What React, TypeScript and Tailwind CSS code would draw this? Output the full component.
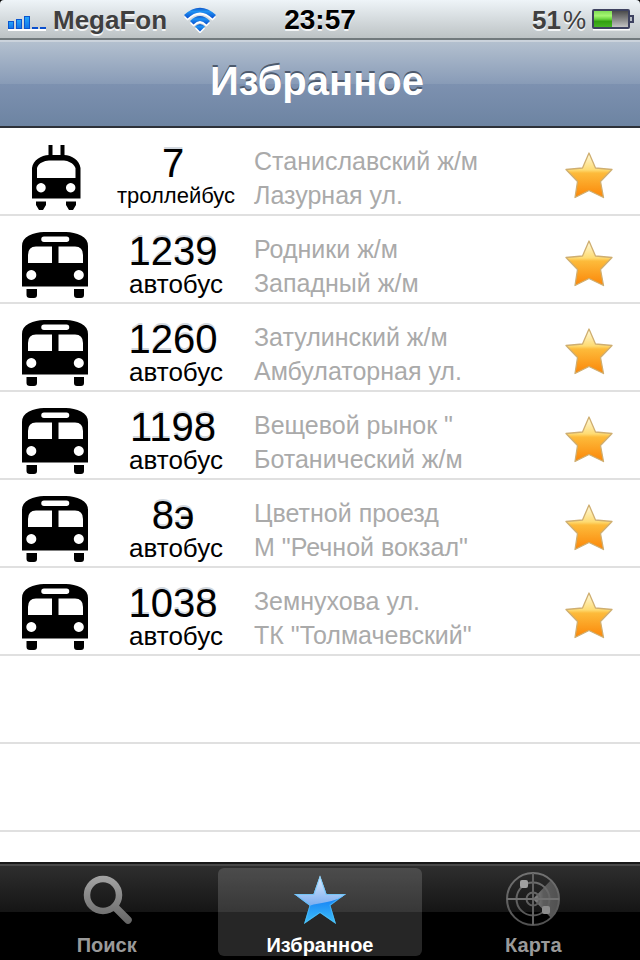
import type { ReactNode } from "react";

type Route = {
  number: string;
  kind: "троллейбус" | "автобус";
  from: string;
  to: string;
};

const routes: Route[] = [
  { number: "7", kind: "троллейбус", from: "Станиславский ж/м", to: "Лазурная ул." },
  { number: "1239", kind: "автобус", from: "Родники ж/м", to: "Западный ж/м" },
  { number: "1260", kind: "автобус", from: "Затулинский ж/м", to: "Амбулаторная ул." },
  { number: "1198", kind: "автобус", from: "Вещевой рынок \"", to: "Ботанический ж/м" },
  { number: "8э", kind: "автобус", from: "Цветной проезд", to: "М \"Речной вокзал\"" },
  { number: "1038", kind: "автобус", from: "Земнухова ул.", to: "ТК \"Толмачевский\"" },
];

function SignalIcon() {
  return (
    <svg width="38" height="16" viewBox="0 0 38 16" aria-hidden="true">
      <defs>
        <linearGradient id="signal" x1="0" y1="0" x2="0" y2="1">
          <stop offset="0" stopColor="#27a8fb" />
          <stop offset="1" stopColor="#1173e6" />
        </linearGradient>
      </defs>
      <path d="M0 14h38" stroke="#fff" strokeWidth="2" />
      <g fill="url(#signal)" stroke="#0b55cf">
        <rect x=".5" y="5.500" width="5" height="7" />
        <rect x="8.500" y="3.500" width="5" height="9" />
        <rect x="16.500" y=".5" width="5" height="12" />
      </g>
      <path d="M24 12h6M32 12h6" stroke="#0b50cd" strokeWidth="2" />
    </svg>
  );
}

function WifiIcon() {
  return (
    <svg width="32" height="26" viewBox="0 0 32 26" aria-hidden="true">
      <defs>
        <linearGradient id="wifi" x1="0" y1="0" x2="0" y2="1">
          <stop offset="0" stopColor="#0f55c8" />
          <stop offset=".35" stopColor="#1f92f2" />
          <stop offset="1" stopColor="#0a4fd0" />
        </linearGradient>
      </defs>
      <g fill="#fff" transform="translate(0 2)">
        <path d="M0 8Q16-6.500 32 8L28.500 11.500Q16-.5 3.500 11.500Z" />
        <path d="M6 14Q16 4 26 14L22.500 17.500Q16 10.500 9.500 17.500Z" />
        <path d="M11 19.500Q16 14.500 21 19.500L16 24.500Z" />
      </g>
      <path fill="url(#wifi)" d="M0 8Q16-6.500 32 8L28.500 11.500Q16-.5 3.500 11.500Z" />
      <path fill="url(#wifi)" d="M6 14Q16 4 26 14L22.500 17.500Q16 10.500 9.500 17.500Z" />
      <path fill="url(#wifi)" d="M11 19.500Q16 14.500 21 19.500L16 24.500Z" />
    </svg>
  );
}

function BatteryIcon() {
  return (
    <svg width="42" height="22" viewBox="0 0 42 22" aria-hidden="true">
      <defs>
        <linearGradient id="charge" x1="0" y1="0" x2="0" y2="1">
          <stop offset="0" stopColor="#7fdd55" />
          <stop offset=".3" stopColor="#a5f572" />
          <stop offset=".5" stopColor="#6bd540" />
          <stop offset=".65" stopColor="#32a010" />
          <stop offset="1" stopColor="#45b324" />
        </linearGradient>
        <linearGradient id="empty" x1="0" y1="0" x2="0" y2="1">
          <stop offset="0" stopColor="#444" />
          <stop offset=".5" stopColor="#858585" />
          <stop offset="1" stopColor="#cbcbcb" />
        </linearGradient>
      </defs>
      <path d="M1 20.500h37" stroke="#fff" strokeWidth="2" />
      <rect x="1" y="1" width="36" height="18" rx="1" fill="url(#empty)" stroke="#3e4260" strokeWidth="2" />
      <rect x="2" y="2" width="18" height="16" fill="url(#charge)" />
      <path d="M38 7h3v6h-3" fill="#b9bec6" stroke="#3e4260" strokeWidth="2" />
    </svg>
  );
}

function BusIcon() {
  return (
    <svg width="66" height="66" viewBox="0 0 66 66" role="img" aria-label="Автобус">
      <path
        fillRule="evenodd"
        d="M0 54.500V14Q0 7 7 3.500Q14 0 22 0H44Q52 0 59 3.500Q66 7 66 14V54.500ZM22 4.500a2.700 2.700 0 0 0 0 5.500H44.500a2.700 2.700 0 0 0 0-5.500ZM6 31V23Q6 14.500 14 14.500H30V31ZM36.500 31V14.500H53Q61 14.500 61 23V31ZM9.300 38a5 5 0 1 0 .01 0ZM56.800 38a5 5 0 1 0 .01 0Z"
      />
      <path d="M4.500 57H15V63Q15 66 12 66H8Q4.500 66 4.500 63ZM52 57H62V63Q62 66 59 66H55Q52 66 52 63Z" />
    </svg>
  );
}

function TrolleybusIcon() {
  return (
    <svg width="66" height="66" viewBox="0 0 66 66" role="img" aria-label="Троллейбус">
      <path d="M26.500 1H30.500V12H26.500ZM38.500 1H42.500V12H38.500Z" />
      <path
        fillRule="evenodd"
        d="M10 54.500V24C11 16 19 11.500 27 11H42C50 11.500 57.500 16 58.500 24V54.500ZM15 34H53.500V24C51 18.500 46 17 42 16.500H27C22 17 17 18.500 15 24ZM19 39a4.700 4.700 0 1 0 .01 0ZM48.700 39a4.700 4.700 0 1 0 .01 0Z"
      />
      <path d="M14 57.500H24V61L21 66H17L14 61ZM44 57.500H54V61L51 66H47L44 61Z" />
    </svg>
  );
}

function GoldStar() {
  return (
    <svg width="50" height="50" viewBox="0 0 50 50" aria-hidden="true">
      <defs>
        <linearGradient id="gold" x1="0" y1="0" x2="0" y2="1">
          <stop offset="0" stopColor="#fffbe0" />
          <stop offset=".38" stopColor="#fedb72" />
          <stop offset=".45" stopColor="#fdbb3b" />
          <stop offset="1" stopColor="#fb8608" />
        </linearGradient>
      </defs>
      <path
        d="M25 2L31.500 17L48 18.500L36.500 30.500L39.500 46.500L25 39.500L11 46.500L13.500 30.500L2 18.500L18.500 17Z"
        fill="url(#gold)"
        stroke="#cfae70"
        strokeWidth="1.300"
        strokeLinejoin="round"
      />
    </svg>
  );
}

function SearchIcon() {
  return (
    <svg width="56" height="56" viewBox="0 0 56 56" fill="none" aria-hidden="true">
      <defs>
        <linearGradient id="lens" gradientUnits="userSpaceOnUse" x1="0" y1="4" x2="0" y2="52">
          <stop offset="0" stopColor="#a5a5a5" />
          <stop offset="1" stopColor="#666" />
        </linearGradient>
      </defs>
      <g stroke="url(#lens)">
        <circle cx="24" cy="24" r="16" strokeWidth="6.500" />
        <path d="M36 36L49 49" strokeWidth="7.500" strokeLinecap="round" />
      </g>
    </svg>
  );
}

function BlueStar() {
  return (
    <svg width="56" height="56" viewBox="0 0 56 56" aria-hidden="true">
      <defs>
        <linearGradient id="blue" x1="0" y1="0" x2="0" y2="1">
          <stop offset="0" stopColor="#86bdf5" />
          <stop offset=".5" stopColor="#1683f5" />
          <stop offset="1" stopColor="#45c8fa" />
        </linearGradient>
        <linearGradient id="gloss" x1="0" y1="0" x2="0" y2="1">
          <stop offset="0" stopColor="#f1f7ff" />
          <stop offset="1" stopColor="#75aaf0" />
        </linearGradient>
        <clipPath id="star">
          <path d="M28 4.500L34.500 23H54L38.500 34.500L44 53L28 42L12 53L17.500 34.500L2 23H21.500Z" />
        </clipPath>
      </defs>
      <g clipPath="url(#star)">
        <path d="M0 0H56V56H0Z" fill="url(#blue)" />
        <path d="M0 0H56V24Q40 31 30 32Q21 33 14 36L0 24Z" fill="url(#gloss)" />
        <path
          d="M28 4.500L34.500 23H54L38.500 34.500L44 53L28 42L12 53L17.500 34.500L2 23H21.500Z"
          fill="none"
          stroke="#56c5f7"
          strokeOpacity=".6"
          strokeWidth="2"
        />
      </g>
    </svg>
  );
}

function RadarIcon() {
  return (
    <svg width="56" height="56" viewBox="0 0 56 56" fill="none" aria-hidden="true">
      <defs>
        <linearGradient id="sweep">
          <stop offset="0" stopColor="#8a8a8a" />
          <stop offset=".4" stopColor="#5c5c5c" />
          <stop offset="1" stopColor="#505050" />
        </linearGradient>
        <linearGradient id="rings" gradientUnits="userSpaceOnUse" x1="0" y1="0" x2="0" y2="56">
          <stop offset="0" stopColor="#747474" />
          <stop offset="1" stopColor="#505050" />
        </linearGradient>
      </defs>
      <path d="M28 28L46 9A26 26 0 0 1 46 47Z" fill="url(#sweep)" />
      <g stroke="url(#rings)" strokeWidth="2">
        <circle cx="28" cy="28" r="26" />
        <circle cx="28" cy="28" r="16.500" />
        <circle cx="28" cy="28" r="6.500" />
        <path d="M28 2V54" stroke="#626262" />
        <path d="M2 28H54" stroke="#707070" />
      </g>
      <rect x="15" y="9" width="8" height="8" rx="2" fill="#a0a0a0" />
      <rect x="37" y="35" width="8" height="8" rx="2" fill="#8c8c8c" />
    </svg>
  );
}

function RouteRow({ route }: { route: Route }) {
  const trolley = route.kind === "троллейбус";
  return (
    <li className="flex h-[88px] border-b-2 border-[#e0e0e0] px-[22px]">
      <div className="w-[66px] shrink-0 pt-4">{trolley ? <TrolleybusIcon /> : <BusIcon />}</div>
      <div className="ml-6 w-32 shrink-0 pt-[15px] text-center text-black">
        <div className="pr-1.5 text-[40px] leading-10 [text-shadow:0_-2px_0_#d3d9e0]">{route.number}</div>
        <div className={trolley ? "text-[22px] leading-[26px]" : "text-[26px] leading-[26px]"}>{route.kind}</div>
      </div>
      <div className="ml-3.5 min-w-0 flex-1 pt-4 text-[25px] leading-[34px] whitespace-nowrap text-[#aaa]">
        <div>{route.from}</div>
        <div>{route.to}</div>
      </div>
      <button type="button" aria-label="Убрать из избранного" className="mt-[23px] h-[50px] w-[54px] shrink-0">
        <GoldStar />
      </button>
    </li>
  );
}

function Tab({ label, icon, active = false }: { label: string; icon: ReactNode; active?: boolean }) {
  return (
    <button
      type="button"
      aria-current={active ? "page" : undefined}
      className={`mx-[5px] flex h-[88px] flex-1 flex-col items-center rounded-md text-[20px] leading-6 font-bold ${
        active ? "bg-white/15 text-white" : "text-[#9a9a9a]"
      }`}
    >
      <span className="mt-[3px] mb-1.5">{icon}</span>
      {label}
    </button>
  );
}

export default function App() {
  return (
    <div className="flex min-h-screen flex-col bg-white font-['Liberation_Sans',Arial,sans-serif]">
      <div className="bg-black">
        <header className="grid h-10 grid-cols-[1fr_auto_1fr] items-center rounded-t-[4px] border-b-2 border-[#727a7d] bg-linear-to-b from-[#eef4f8] to-[#bdc3c5] pt-0.5 text-[26px] leading-9 font-bold text-[#3f3f3f] [text-shadow:0_2px_0_#f4f6f7]">
          <div className="flex items-center pl-2">
            <div className="mt-2">
              <SignalIcon />
            </div>
            <span className="ml-[7px]">MegaFon</span>
            <div className="ml-[17px]">
              <WifiIcon />
            </div>
          </div>
          <time className="text-[28px] text-black">23:57</time>
          <div className="flex items-center justify-end pr-1.5">
            <span>51</span>
            <span className="ml-0.5 font-normal">%</span>
            <div className="ml-1.5">
              <BatteryIcon />
            </div>
          </div>
        </header>
      </div>

      <div className="flex h-[88px] items-center justify-center border-t-2 border-b-2 border-t-[#cbd3dc] border-b-[#2d3138] bg-[linear-gradient(to_bottom,#b3c0cf_0%,#889bb7_50%,#7d91b0_50%,#6d84a2_100%)] pr-1.5 pb-1.5">
        <h1 className="text-[40px] leading-[48px] font-bold text-white [text-shadow:0_-2px_0_#4d5a6d]">Избранное</h1>
      </div>

      <main className="flex-1">
        <ul>
          {routes.map((route) => (
            <RouteRow key={route.number} route={route} />
          ))}
          <li aria-hidden="true" className="h-[88px] border-b-2 border-[#e0e0e0]" />
          <li aria-hidden="true" className="h-[88px] border-b-2 border-[#e0e0e0]" />
        </ul>
      </main>

      <nav className="flex h-[98px] border-t-2 border-[#191919] bg-[linear-gradient(to_bottom,#484848_0px,#484848_2px,#2e2e2e_2px,#151515_48px,#000_48px)] pt-1">
        <Tab label="Поиск" icon={<SearchIcon />} />
        <Tab label="Избранное" icon={<BlueStar />} active />
        <Tab label="Карта" icon={<RadarIcon />} />
      </nav>
    </div>
  );
}
